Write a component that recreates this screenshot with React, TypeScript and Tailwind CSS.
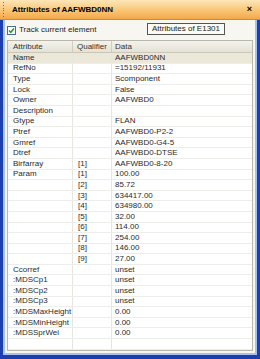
import React from "react";

const rows: [string, string, string][] = [
  ["Name", "", "AAFWBD0NN"],
  ["RefNo", "", "=15192/11931"],
  ["Type", "", "Scomponent"],
  ["Lock", "", "False"],
  ["Owner", "", "AAFWBD0"],
  ["Description", "", ""],
  ["Gtype", "", "FLAN"],
  ["Ptref", "", "AAFWBD0-P2-2"],
  ["Gmref", "", "AAFWBD0-G4-5"],
  ["Dtref", "", "AAFWBD0-DTSE"],
  ["Birfarray", "[1]", "AAFWBD0-8-20"],
  ["Param", "[1]", "100.00"],
  ["", "[2]", "85.72"],
  ["", "[3]", "634417.00"],
  ["", "[4]", "634980.00"],
  ["", "[5]", "32.00"],
  ["", "[6]", "114.00"],
  ["", "[7]", "254.00"],
  ["", "[8]", "146.00"],
  ["", "[9]", "27.00"],
  ["Ccorref", "", "unset"],
  [":MDSCp1", "", "unset"],
  [":MDSCp2", "", "unset"],
  [":MDSCp3", "", "unset"],
  [":MDSMaxHeight", "", "0.00"],
  [":MDSMinHeight", "", "0.00"],
  [":MDSSprWei", "", "0.00"],
  ["", "", ""],
];

export default function App() {
  return (
    <div
      className="w-[260px] h-[359px] flex flex-col bg-[#1b3fae] overflow-hidden text-[8px] leading-none text-[#2a2a2a]"
      style={{ fontFamily: '"Liberation Sans", Arial, sans-serif' }}
    >
      {/* title bar */}
      <div className="h-[20px] shrink-0 flex items-center bg-gradient-to-b from-[#fde6b8] via-[#f9c879] to-[#f3a948] border-b border-[#d08a30]">
        <div className="w-[4px] ml-[2px] h-[15px] flex flex-col justify-between">
          {Array.from({ length: 6 }).map((_, i) => (
            <div key={i} className="w-[1px] h-[1px] bg-[#7a6a50] ml-[1px]" />
          ))}
        </div>
        <div className="ml-[6px] font-bold text-[8px] text-black">Attributes of AAFWBD0NN</div>
        <div className="flex-1" />
        <div className="mr-[8px] font-bold text-[9px] text-black">×</div>
      </div>
      {/* body */}
      <div className="flex-1 flex flex-col mx-[3px] mb-[5px] border-x-2 border-b-2 border-[#a8c0ec] bg-[#f7f6f0]">
        <div className="h-[20px] shrink-0 flex items-center pl-[2px]">
          <div className="w-[9px] h-[9px] border border-[#4a6a9a] bg-white flex items-center justify-center">
            <svg width="7" height="7" viewBox="0 0 7 7">
              <path d="M1 3.5 L2.8 5.3 L6 1.5" stroke="#21a121" strokeWidth="1.6" fill="none" />
            </svg>
          </div>
          <div className="ml-[3px] text-[8px] text-[#222]">Track current element</div>
          <div className="flex-1" />
          <div className="mr-[30px] mt-[-2px] h-[12px] px-[4px] flex items-center border border-[#555] bg-[#fbfbf4] text-[8px] text-[#222]">
            Attributes of E1301
          </div>
        </div>
        <div className="flex-1 mx-[2px] mb-[2px] border border-[#b9b7ab] bg-white flex flex-col">
          <div className="h-[12px] shrink-0 grid grid-cols-[65px_39px_1fr] bg-gradient-to-b from-[#f4f3ec] to-[#e4e2d6] border-b border-[#cbc7b8] text-[#333]">
            <div className="flex items-center pl-[5px] border-r border-[#d0cdc0]">Attribute</div>
            <div className="flex items-center pl-[4px] border-r border-[#d0cdc0]">Qualifier</div>
            <div className="flex items-center pl-[3px]">Data</div>
          </div>
          <div className="flex-1 flex flex-col">
            {rows.map((r, i) => (
              <div
                key={i}
                className={
                  "h-[10.6px] shrink-0 grid grid-cols-[65px_39px_1fr] border-b border-[#ededea] " +
                  (i === 0 ? "bg-[#ebe8da]" : "")
                }
              >
                <div className="flex items-center pl-[5px] border-r border-[#e6e6e0]">{r[0]}</div>
                <div className="flex items-center pl-[5px] border-r border-[#e6e6e0]">{r[1]}</div>
                <div className="flex items-center pl-[3px]">{r[2]}</div>
              </div>
            ))}
          </div>
        </div>
      </div>
    </div>
  );
}
